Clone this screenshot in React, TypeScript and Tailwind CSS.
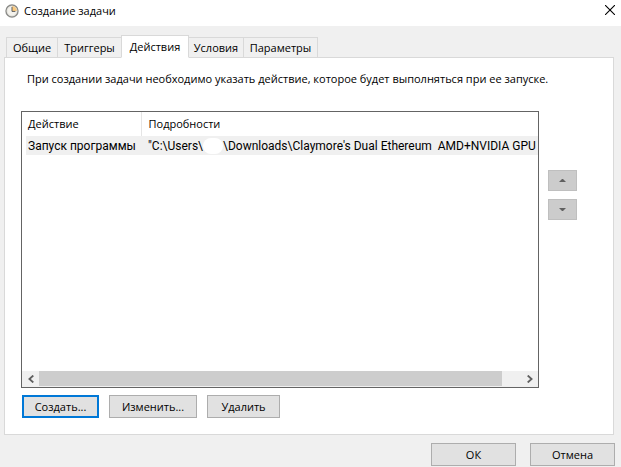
import { useState } from 'react';

const TABS = [
  { id: 'general', label: 'Общие', width: 'w-[52px]' },
  { id: 'triggers', label: 'Триггеры', width: 'w-[65px]' },
  { id: 'actions', label: 'Действия', width: 'w-[68px]' },
  { id: 'conditions', label: 'Условия', width: 'w-[56px]' },
  { id: 'settings', label: 'Параметры', width: 'w-[75px]' },
];

const pushButton =
  'h-[23px] border border-[#adadad] bg-[#e1e1e1] text-center leading-4 hover:border-[#0078d7] hover:bg-[#e5f1fb]';

function ClockIcon() {
  return (
    <svg className="size-[14px]" viewBox="0 0 14 14" aria-hidden="true">
      <circle cx="7" cy="7" r="6" fill="#f4f2ec" stroke="#8b8b88" strokeWidth="1.4" />
      <path d="M7 7V1.8A5.2 5.2 0 0 1 12.2 7Z" fill="#fbc97c" />
      <circle cx="7" cy="7" r="4.9" fill="none" stroke="#d3d3cf" strokeWidth="0.5" />
      <path d="M7 3v4.4h3.4" fill="none" stroke="#5c5c5c" strokeWidth="1" />
    </svg>
  );
}

function TitleBar() {
  return (
    <header className="flex h-[26px] items-start bg-white pl-[5px] pr-[6px]">
      <div className="mt-1">
        <ClockIcon />
      </div>
      <h1 className="ml-[5px] mt-[3px] flex-1 leading-4">Создание задачи</h1>
      <button type="button" aria-label="Закрыть" className="mt-[5px]">
        <svg className="size-[10px]" viewBox="0 0 10 10" stroke="#000" strokeWidth="1.1">
          <path d="M0 0L10 10M10 0L0 10" />
        </svg>
      </button>
    </header>
  );
}

function ActionList() {
  return (
    <div className="flex min-h-[277px] min-w-0 flex-1 flex-col border border-[#646464] bg-white">
      <div className="flex-1 overflow-hidden pl-1">
        <table className="w-full table-fixed border-collapse whitespace-pre text-left">
          <thead>
            <tr className="h-6">
              <th className="w-[115px] border-r border-[#e5e5e5] p-0 pl-[2px] font-normal">
                Действие
              </th>
              <th className="p-0 pl-[7px] font-normal">Подробности</th>
            </tr>
          </thead>
          <tbody>
            <tr className="h-[19px] bg-[#f0f0f0] font-[Roboto,sans-serif] text-[12px]">
              <td className="p-0 pl-[2px] leading-4">Запуск программы</td>
              <td className="overflow-hidden p-0 pl-[7px] leading-4">
                {'"C:\\Users\\'}
                {/* hidden user name */}
                <span className="inline-block h-4 w-5 rounded-full bg-white align-top" />
                {"\\Downloads\\Claymore's Dual Ethereum  AMD+NVIDIA GPU"}
              </td>
            </tr>
          </tbody>
        </table>
      </div>

      {/* Horizontal scroll bar */}
      <div className="flex h-4 bg-[#f0f0f0] pb-px">
        <button type="button" aria-label="Влево" className="flex w-[17px] items-center justify-center">
          <svg className="h-[8px] w-[6px]" viewBox="0 0 6 8" fill="none" stroke="#606060" strokeWidth="1.8">
            <path d="M5.3 0.5L1.4 4L5.3 7.5" />
          </svg>
        </button>
        <div className="flex-1 bg-[#cdcdcd]" />
        <button type="button" aria-label="Вправо" className="flex w-9 items-center justify-end pr-[5px]">
          <svg className="h-[8px] w-[6px]" viewBox="0 0 6 8" fill="none" stroke="#606060" strokeWidth="1.8">
            <path d="M0.7 0.5L4.6 4L0.7 7.5" />
          </svg>
        </button>
      </div>
    </div>
  );
}

function MoveButton({ direction }: { direction: 'up' | 'down' }) {
  return (
    <button
      type="button"
      disabled
      aria-label={direction === 'up' ? 'Вверх' : 'Вниз'}
      className="flex h-[21px] w-[29px] items-center justify-center border border-[#bfbfbf] bg-[#cccccc]"
    >
      <svg className="h-[3px] w-[7px]" viewBox="0 0 7 3" fill="#606060">
        <path d={direction === 'up' ? 'M0 3L3 0H4L7 3Z' : 'M0 0L3 3H4L7 0Z'} />
      </svg>
    </button>
  );
}

export default function App() {
  const [active, setActive] = useState('actions');

  return (
    <div className="flex min-h-screen flex-col bg-[#f0f0f0] font-['Open_Sans',sans-serif] text-[11px] leading-4 text-black">
      <TitleBar />

      <main className="flex flex-1 flex-col pb-[2px] pl-1 pr-[6px] pt-[9px]">
        <div role="tablist" className="flex items-end pl-[2px]">
          {TABS.map((tab) => (
            <button
              key={tab.id}
              type="button"
              role="tab"
              aria-selected={tab.id === active}
              onClick={() => setActive(tab.id)}
              className={`${tab.width} -mr-px border border-[#d9d9d9] leading-4 ${
                tab.id === active
                  ? 'relative z-10 h-[23px] border-b-white bg-white'
                  : 'h-[21px] bg-[#f0f0f0]'
              }`}
            >
              {tab.label}
            </button>
          ))}
        </div>

        <section
          role="tabpanel"
          className="-mt-px mr-px flex flex-1 flex-col border border-[#d9d9d9] bg-white pb-4 pl-4 pr-9 pt-[13px]"
        >
          <p className="pl-[6px]">
            При создании задачи необходимо указать действие, которое будет выполняться при ее запуске.
          </p>

          <div className="mt-6 flex flex-1 gap-[9px]">
            <ActionList />
            <div className="flex flex-col gap-2 pt-[59px]">
              <MoveButton direction="up" />
              <MoveButton direction="down" />
            </div>
          </div>

          <div className="mt-[7px] flex gap-[10px] pl-px">
            <button type="button" className="h-[23px] w-[77px] border-2 border-[#0078d7] bg-[#e1e1e1] leading-4">
              Создать...
            </button>
            <button type="button" className={`${pushButton} w-[88px]`}>
              Изменить...
            </button>
            <button type="button" className={`${pushButton} w-[73px]`}>
              Удалить
            </button>
          </div>
        </section>

        <footer className="mt-2 flex justify-end gap-[14px]">
          <button type="button" className={`${pushButton} w-[85px]`}>
            ОК
          </button>
          <button type="button" className={`${pushButton} w-[85px]`}>
            Отмена
          </button>
        </footer>
      </main>
    </div>
  );
}
